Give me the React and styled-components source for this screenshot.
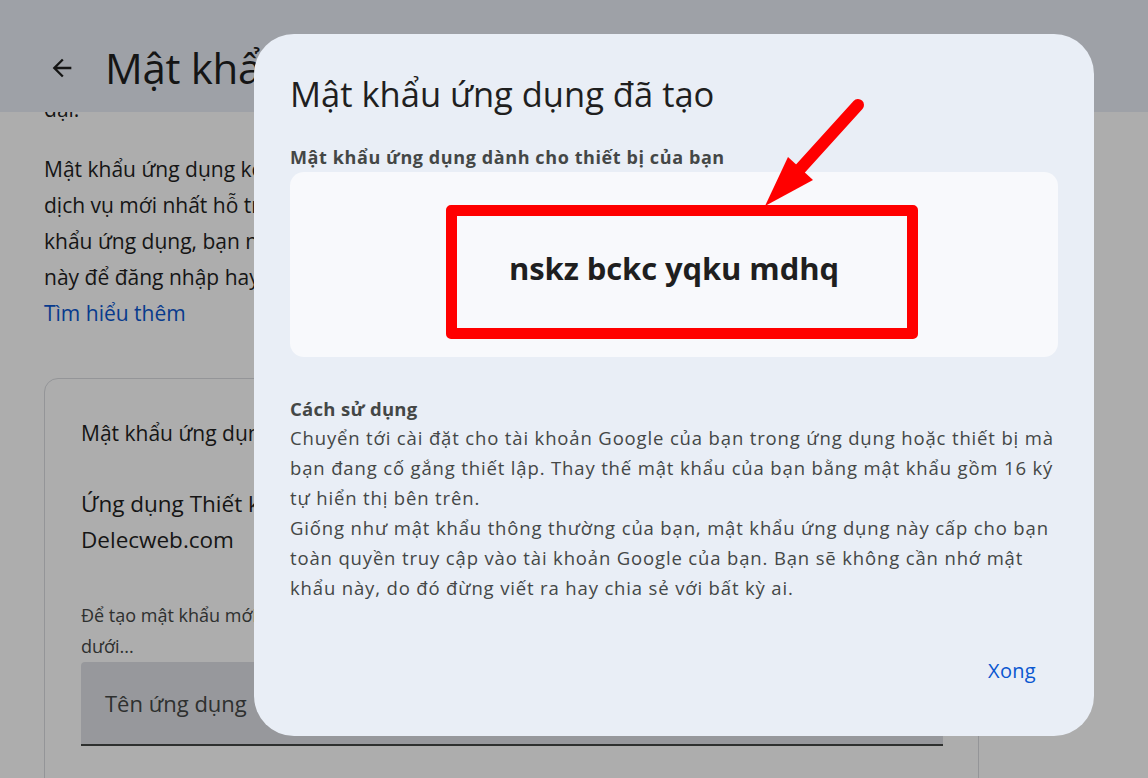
import styled, { createGlobalStyle } from "styled-components";

const GlobalStyle = createGlobalStyle`
    html, body {
        margin: 0;
        padding: 0;
        background: #ffffff;
        font-family: "Open Sans", "Noto Sans", Arial, sans-serif;
        color: #1f1f1f;
    }
    * { box-sizing: border-box; }
`;

const Page = styled.div`
    position: relative;
    width: 1148px;
    height: 778px;
    overflow: hidden;
    display: flex;
    flex-direction: column;
    background: #ffffff;
`;

const Header = styled.header`
    flex: 0 0 112px;
    display: flex;
    align-items: center;
    gap: 29px;
    padding: 28px 0 0 48px;
    background: #e9eef6;
    position: relative;
    z-index: 1;
`;

const BackButton = styled.span`
    display: flex;
    width: 28px;
    height: 28px;
    margin-top: -4px;
`;

const PageTitle = styled.h1`
    margin: 0 0 6px;
    font-size: 42px;
    font-weight: 500;
    letter-spacing: -0.3px;
    white-space: nowrap;
`;

const Main = styled.main`
    flex: 1;
    overflow: hidden;
    padding: 0 44px;
`;

const Scrolled = styled.div`
    margin-top: -21px;
`;

const Paragraph = styled.p`
    margin: 0 0 24px;
    font-size: 21px;
    line-height: 36px;
    white-space: nowrap;
`;

const Link = styled.span`
    color: #0b57d0;
`;

const Card = styled.section`
    margin-top: 47px;
    width: 935px;
    height: 600px;
    border: 1px solid #dadce0;
    border-radius: 14px;
    padding: 36px 36px 0;
`;

const CardTitle = styled.div`
    font-size: 21px;
    font-weight: 500;
    line-height: 36px;
    margin-bottom: 35px;
`;

const AppName = styled.div`
    font-size: 22.5px;
    line-height: 36px;
    margin-bottom: 42px;
`;

const Hint = styled.div`
    font-size: 18px;
    line-height: 31px;
    color: #444746;
    white-space: nowrap;
`;

const Field = styled.div`
    width: 862px;
    height: 84px;
    background: #dfe1e6;
    border-bottom: 2px solid #444746;
    border-radius: 4px 4px 0 0;
    display: flex;
    align-items: center;
    padding: 0 24px;
    font-size: 22px;
    color: #444746;
`;

const Scrim = styled.div`
    position: absolute;
    inset: 0;
    background: rgba(0, 0, 0, 0.32);
    z-index: 2;
`;

const Dialog = styled.div`
    position: absolute;
    left: 254px;
    top: 34px;
    width: 840px;
    height: 702px;
    background: #e9eef6;
    border-radius: 40px;
    padding: 36px 36px 0;
    z-index: 3;
    display: flex;
    flex-direction: column;
`;

const DialogTitle = styled.h2`
    margin: 0;
    font-size: 34.5px;
    font-weight: 400;
    line-height: 48px;
    color: #1f1f1f;
`;

const FieldLabel = styled.div`
    margin: 28px 0 4px;
    font-size: 18px;
    font-weight: 700;
    letter-spacing: 0.6px;
    line-height: 22px;
    color: #444746;
`;

const PasswordBox = styled.div`
    height: 185px;
    background: #f8f9fc;
    border-radius: 14px;
    display: flex;
    align-items: center;
    justify-content: center;
    padding-top: 6px;
`;

const Password = styled.span`
    font-size: 31px;
    font-weight: 700;
    color: #1f1f1f;
    letter-spacing: -0.1px;
`;

const Section = styled.div`
    margin-top: 38px;
    font-size: 18.5px;
    line-height: 30px;
    letter-spacing: 0.85px;
    color: #444746;
    white-space: nowrap;
`;

const SectionTitle = styled.div`
    font-weight: 700;
    font-size: 18.5px;
    letter-spacing: 0.3px;
    line-height: 28px;
`;

const Actions = styled.div`
    margin-top: auto;
    display: flex;
    justify-content: flex-end;
    padding: 0 22px 48px 0;
`;

const TextButton = styled.button`
    border: none;
    background: none;
    font-family: inherit;
    font-size: 20px;
    font-weight: 500;
    letter-spacing: 0.3px;
    color: #0b57d0;
    height: 36px;
    padding: 0;
    cursor: pointer;
`;

const Highlight = styled.div`
    position: absolute;
    left: 192px;
    top: 171px;
    width: 472px;
    height: 134px;
    border: 11px solid #ff0000;
    border-radius: 5px;
`;

const Arrow = styled.svg`
    position: absolute;
    left: 496px;
    top: 61px;
`;

const App = () => {
    return (
        <>
            <GlobalStyle />
            <Page>
                <Header>
                    <BackButton>
                        <svg width="28" height="28" viewBox="0 0 24 24">
                            <path d="M20 11H7.83l5.59-5.59L12 4l-8 8 8 8 1.41-1.41L7.83 13H20v-2z" fill="#1f1f1f" />
                        </svg>
                    </BackButton>
                    <PageTitle>Mật khẩu ứng dụng</PageTitle>
                </Header>
                <Main>
                    <Scrolled>
                        <Paragraph>đại.</Paragraph>
                        <Paragraph>
                            Mật khẩu ứng dụng kém an toàn hơn so với việc sử dụng các ứng dụng và<br />
                            dịch vụ mới nhất hỗ trợ tiêu chuẩn bảo mật hiện đại. Trước khi tạo mật<br />
                            khẩu ứng dụng, bạn nên kiểm tra xem ứng dụng có cần mật khẩu<br />
                            này để đăng nhập hay không.<br />
                            <Link>Tìm hiểu thêm</Link>
                        </Paragraph>
                        <Card>
                            <CardTitle>Mật khẩu ứng dụng của bạn</CardTitle>
                            <AppName>
                                Ứng dụng Thiết kế website<br />
                                Delecweb.com
                            </AppName>
                            <Hint>
                                Để tạo mật khẩu mới dành riêng cho ứng dụng, hãy nhập tên ở bên<br />
                                dưới...
                            </Hint>
                            <Field>Tên ứng dụng</Field>
                        </Card>
                    </Scrolled>
                </Main>
                <Scrim />
                <Dialog>
                    <DialogTitle>Mật khẩu ứng dụng đã tạo</DialogTitle>
                    <FieldLabel>Mật khẩu ứng dụng dành cho thiết bị của bạn</FieldLabel>
                    <PasswordBox>
                        <Password>nskz bckc yqku mdhq</Password>
                    </PasswordBox>
                    <Section>
                        <SectionTitle>Cách sử dụng</SectionTitle>
                        Chuyển tới cài đặt cho tài khoản Google của bạn trong ứng dụng hoặc thiết bị mà<br />
                        bạn đang cố gắng thiết lập. Thay thế mật khẩu của bạn bằng mật khẩu gồm 16 ký<br />
                        tự hiển thị bên trên.<br />
                        Giống như mật khẩu thông thường của bạn, mật khẩu ứng dụng này cấp cho bạn<br />
                        toàn quyền truy cập vào tài khoản Google của bạn. Bạn sẽ không cần nhớ mật<br />
                        khẩu này, do đó đừng viết ra hay chia sẻ với bất kỳ ai.
                    </Section>
                    <Actions>
                        <TextButton>Xong</TextButton>
                    </Actions>
                    <Highlight />
                    <Arrow width="120" height="120" viewBox="0 0 120 120">
                        <line x1="108" y1="10" x2="50" y2="74" stroke="#ff0000" strokeWidth="12" strokeLinecap="round" />
                        <polygon points="15,111 38,62 63,85" fill="#ff0000" />
                    </Arrow>
                </Dialog>
            </Page>
        </>
    );
};

export default App;
